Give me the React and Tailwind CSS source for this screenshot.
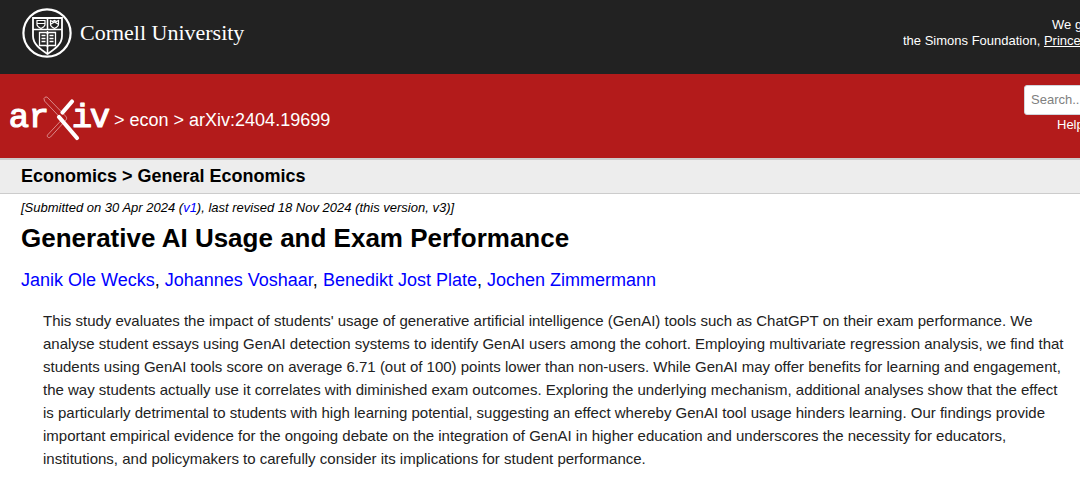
import React from 'react';

const authors = ['Janik Ole Wecks', 'Johannes Voshaar', 'Benedikt Jost Plate', 'Jochen Zimmermann'];

const CornellSeal = () => (
  <svg width="50" height="50" viewBox="0 0 50 50" fill="none" stroke="#fff" aria-hidden="true">
    <circle cx="25" cy="25" r="23.6" strokeWidth="2.2" />
    <path d="M11 10h29v18c0 8-7 13-14.500 18C18 41 11 36 11 28z" strokeWidth="1.8" />
    <path d="M11 21.500h29M25.500 10v11.500M25.500 23v22" strokeWidth="1.600" />
    <path d="M15 12.500h8v4c0 2-2 3-4 4-2-1-4-2-4-4zM15 15.500h8" strokeWidth="1.200" />
    <path d="M28.500 12.500l2 1 2-1 2 1 2-1v4c0 2-2 3-4 4-2-1-4-2-4-4zM29 16l3.500-2 3.500 2" strokeWidth="1.200" />
    <path d="M17.500 24.500h6.500l1.500 1 1.500-1h6.500v13H27l-1.500 1-1.500-1h-6.500z" strokeWidth="1.300" />
    <path d="M19.500 27.500h4M19.500 30.500h4M19.500 33.500h4M27.500 27.500h4M27.500 30.500h4M27.500 33.500h4" strokeWidth="1.300" />
  </svg>
);

const ArxivLogo = () => (
  <svg width="104" height="46" viewBox="0 0 104 46" className="shrink-0" role="img" aria-label="arXiv">
    <g
      fill="#fff"
      stroke="#fff"
      strokeWidth="1.2"
      strokeLinejoin="round"
      fontFamily='"Liberation Mono", monospace'
      fontSize="34"
      textAnchor="middle"
    >
      <text x="11" y="32">a</text>
      <text x="31" y="32">r</text>
      <text x="74" y="32">i</text>
      <text x="92" y="32">v</text>
    </g>
    {/* hollow strokes of the X */}
    <path d="M36 3.500c1-2 3-2 4-.5L57.500 21c1.500 1.500 1.500 3 0 4.500L42.500 42c-1.500 1.500-4 0-3-2L54 24.500 36.500 6z" fill="none" stroke="#e3a5a5" strokeWidth=".8" />
    {/* solid strokes */}
    <path d="M64 6.500L54.500 17.500" stroke="#fff" strokeWidth="4.2" strokeLinecap="round" />
    <path d="M51 22L69 43" stroke="#fff" strokeWidth="4.2" strokeLinecap="round" />
  </svg>
);

const TopBar = () => (
  <div className="flex h-[74px] justify-between bg-[#222]">
    <a href="#cornell" className="ml-[22px] flex items-center gap-2 pb-2 text-white">
      <CornellSeal />
      <span className="font-['Liberation_Serif',serif] text-[22px] leading-7">Cornell University</span>
    </a>
    <div className="w-[177px] shrink-0 overflow-hidden pt-[17px] text-[13px] leading-4 whitespace-nowrap text-white">
      <p className="pl-[149px]">We gratefully</p>
      <p>
        the Simons Foundation, <a href="#princeton" className="underline">Princeton</a>
      </p>
    </div>
  </div>
);

const Header = () => (
  <header className="flex h-[84px] justify-between bg-[#b31b1b] text-white">
    <div className="ml-2 flex items-center gap-0.5">
      <a href="#home" className="block pt-1"><ArxivLogo /></a>
      <nav className="pt-2 text-lg leading-6">
        &gt; <a href="#econ">econ</a> &gt; arXiv:2404.19699
      </nav>
    </div>
    <form className="w-14 shrink-0 overflow-hidden pt-[11px]">
      <input
        type="text"
        aria-label="Search"
        placeholder="Search..."
        className="block h-[30px] w-40 rounded-[3px] border border-gray-300 bg-white px-1.5 pb-0.5 text-[13px] text-black placeholder:text-[#808080]"
      />
      <a href="#help" className="ml-[33px] block text-[13px] leading-5">Help</a>
    </form>
  </header>
);

const App = () => (
  <div className="overflow-hidden bg-white font-['Liberation_Sans',Arial,sans-serif] text-black">
    <TopBar />
    <Header />
    <div className="border-t-2 border-b border-[#ccc] bg-[#ededed] px-[21px]">
      <h2 className="text-lg leading-[33px] font-bold">Economics &gt; General Economics</h2>
    </div>

    <main className="px-[21px]">
      <p className="pt-1 text-[13px] leading-5 italic">
        [Submitted on 30 Apr 2024 (<a href="#v1" className="text-[#00f]">v1</a>), last revised 18 Nov 2024 (this version, v3)]
      </p>
      <h1 className="pt-1 text-[26px] leading-8 font-bold">Generative AI Usage and Exam Performance</h1>
      <div className="pt-3.5 text-lg leading-6">
        {authors.map((name, i) => (
          <React.Fragment key={name}>
            {i > 0 && ', '}
            <a href="#author" className="text-[#00f]">{name}</a>
          </React.Fragment>
        ))}
      </div>
      <blockquote className="mt-[17px] -mr-3 ml-[22px] pb-3 text-[15px] leading-[23px] text-[#222]">
        This study evaluates the impact of students' usage of generative artificial intelligence (GenAI) tools such as
        ChatGPT on their exam performance. We analyse student essays using GenAI detection systems to identify GenAI
        users among the cohort. Employing multivariate regression analysis, we find that students using GenAI tools
        score on average 6.71 (out of 100) points lower than non-users. While GenAI may offer benefits for learning and
        engagement, the way students actually use it correlates with diminished exam outcomes. Exploring the underlying
        mechanism, additional analyses show that the effect is particularly detrimental to students with high learning
        potential, suggesting an effect whereby GenAI tool usage hinders learning. Our findings provide important
        empirical evidence for the ongoing debate on the integration of GenAI in higher education and underscores the
        necessity for educators, institutions, and policymakers to carefully consider its implications for student
        performance.
      </blockquote>
    </main>
  </div>
);

export default App;
